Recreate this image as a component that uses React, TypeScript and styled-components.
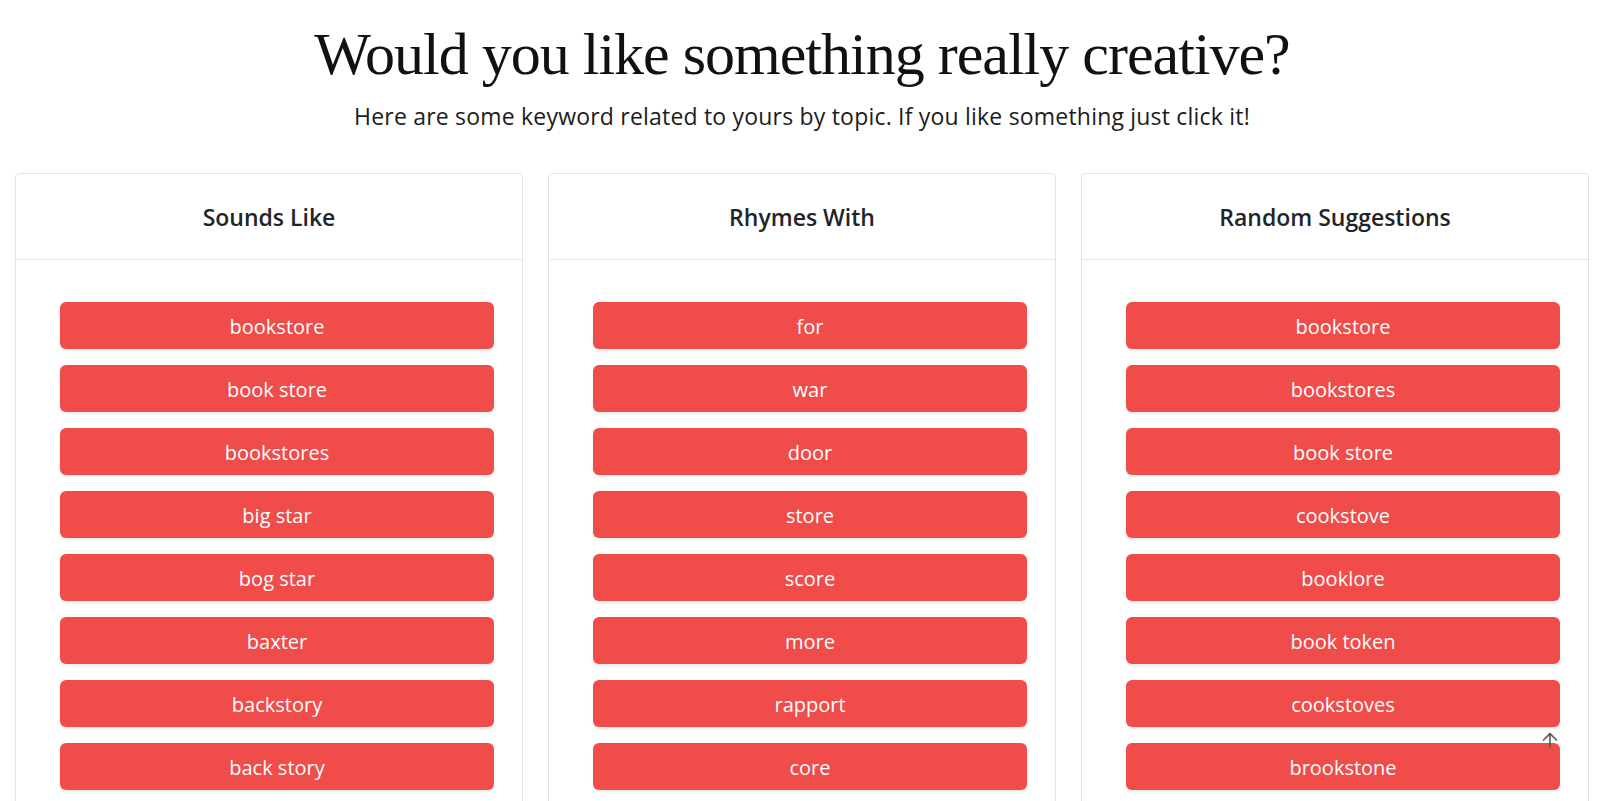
import styled, { createGlobalStyle } from "styled-components"

const GlobalStyle = createGlobalStyle`
  html, body {
    margin: 0;
    padding: 0;
    background: #ffffff;
    overflow: hidden;
  }
  body {
    font-family: "Open Sans", "Noto Sans", sans-serif;
    color: #212529;
  }
`

const sections = [
  {
    title: "Sounds Like",
    words: ["bookstore", "book store", "bookstores", "big star", "bog star", "baxter", "backstory", "back story"],
  },
  {
    title: "Rhymes With",
    words: ["for", "war", "door", "store", "score", "more", "rapport", "core"],
  },
  {
    title: "Random Suggestions",
    words: ["bookstore", "bookstores", "book store", "cookstove", "booklore", "book token", "cookstoves", "brookstone"],
  },
]

const Page = styled.main`
  padding: 0 16px 0 15px;
`

const Hero = styled.header`
  text-align: center;
  padding-top: 18px;
  margin-bottom: 43px;
`

const Title = styled.h1`
  margin: 0;
  font-family: "Liberation Serif", "Times New Roman", serif;
  font-weight: 400;
  font-size: 60px;
  line-height: 72px;
  letter-spacing: -1px;
  color: #111111;
`

const Subtitle = styled.p`
  margin: 12px 0 0;
  font-size: 23px;
  line-height: 28px;
  letter-spacing: 0.2px;
  color: #1c1c1c;
`

const Grid = styled.section`
  display: grid;
  grid-template-columns: repeat(3, 1fr);
  gap: 25px;
`

const Card = styled.article`
  border: 1px solid #e4e4e4;
  border-radius: 4px;
  min-height: 700px;
  background: #fff;
`

const CardHeader = styled.h2`
  margin: 0;
  height: 85px;
  display: flex;
  align-items: center;
  justify-content: center;
  border-bottom: 1px solid #e6e6e6;
  font-size: 23px;
  font-weight: 600;
  color: #212529;
`

const CardBody = styled.div`
  padding: 42px 28px 0 44px;
  display: flex;
  flex-direction: column;
  gap: 16px;
`

const WordButton = styled.button`
  height: 47px;
  width: 100%;
  padding-top: 2px;
  border: none;
  border-radius: 6px;
  background: #ef4c4a;
  color: #ffffff;
  font-family: "Open Sans", "Noto Sans", sans-serif;
  font-size: 20px;
  cursor: pointer;
  box-shadow: 0 2px 3px rgba(0, 0, 0, 0.08);
`

const ScrollTop = styled.button`
  position: fixed;
  right: 44px;
  top: 729px;
  width: 22px;
  height: 22px;
  padding: 0;
  border: none;
  background: transparent;
  color: #5a5a5a;
  cursor: pointer;
`

export default function App() {
  return (
    <>
      <GlobalStyle />
      <Page>
        <Hero>
          <Title>Would you like something really creative?</Title>
          <Subtitle>Here are some keyword related to yours by topic. If you like something just click it!</Subtitle>
        </Hero>
        <Grid>
          {sections.map(section => (
            <Card key={section.title}>
              <CardHeader>{section.title}</CardHeader>
              <CardBody>
                {section.words.map(word => (
                  <WordButton key={word}>{word}</WordButton>
                ))}
              </CardBody>
            </Card>
          ))}
        </Grid>
      </Page>
      <ScrollTop aria-label="Back to top">
        <svg width="22" height="22" viewBox="0 0 24 24" fill="none" stroke="currentColor" strokeWidth="1.8" strokeLinecap="round" strokeLinejoin="round">
          <path d="M12 20V5" />
          <path d="M5 12l7-7 7 7" />
        </svg>
      </ScrollTop>
    </>
  )
}
